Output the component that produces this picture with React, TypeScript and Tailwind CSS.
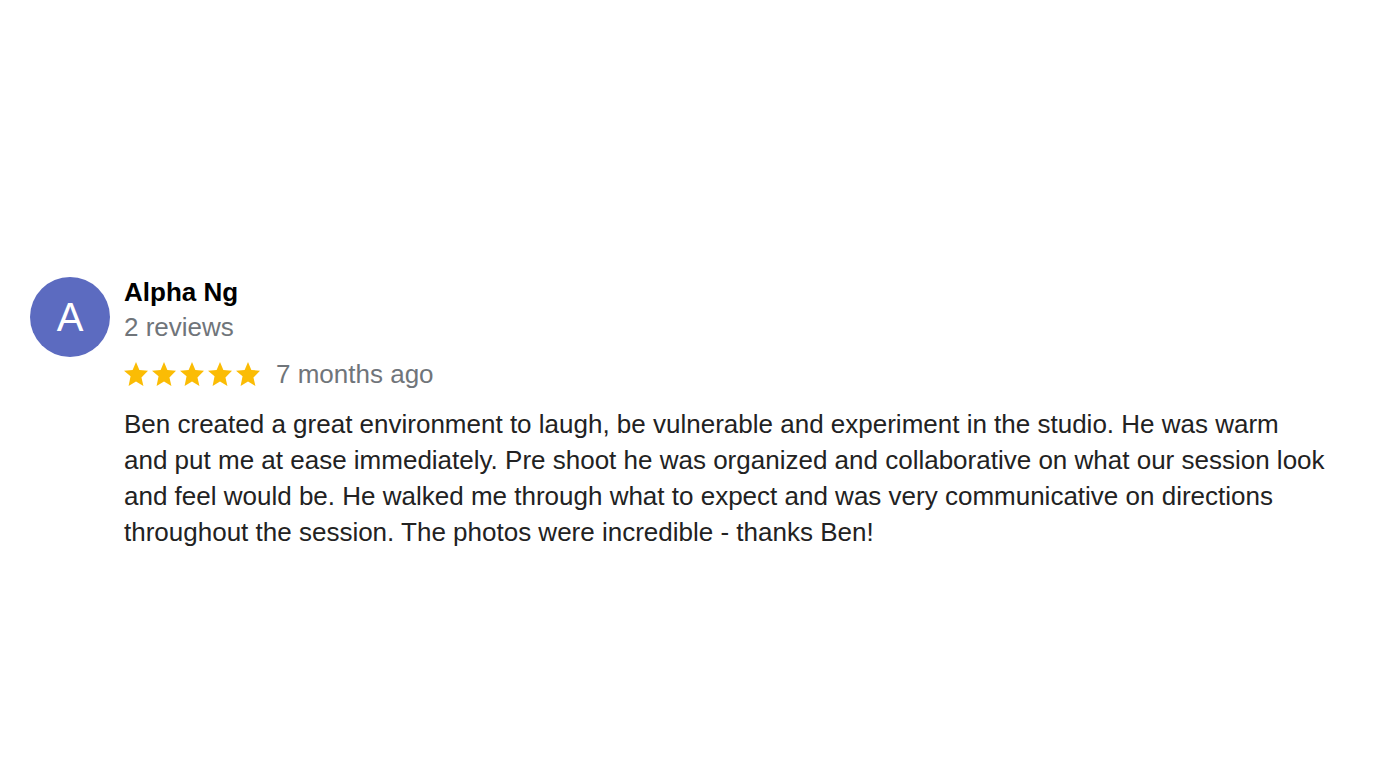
export default function App() {
  const Star = () => (
    <svg viewBox="2 1 20 20" className="w-[24px] h-[24px]" fill="#fbbc04">
      <path d="M12 17.27L18.18 21l-1.64-7.03L22 8.24l-7.19-.61L12 1 9.19 7.63 2 8.24l5.46 4.73L5.82 21z" />
    </svg>
  );
  return (
    <div className="w-[1399px] h-[771px] bg-white" style={{ fontFamily: '"Liberation Sans", Arial, sans-serif' }}>
      <div className="flex pt-[274px] pl-[30px]">
        <div className="w-[80px] h-[80px] mt-[3px] rounded-full bg-[#5c6bc0] flex items-center justify-center text-white text-[40px] shrink-0">
          A
        </div>
        <div className="ml-[14px] flex flex-col">
          <div className="text-[26px] leading-[36px] font-bold text-black">Alpha Ng</div>
          <div className="text-[26px] leading-[34px] text-[#70757a]">2 reviews</div>
          <div className="flex items-center mt-[12px] h-[36px]">
            <div className="flex gap-[4px]">
              <Star />
              <Star />
              <Star />
              <Star />
              <Star />
            </div>
            <span className="ml-[16px] text-[26px] leading-[36px] text-[#70757a]">7 months ago</span>
          </div>
          <p className="mt-[14px] w-[1202px] text-[26px] leading-[36px] text-[#222222]">
            Ben created a great environment to laugh, be vulnerable and experiment in the studio. He was warm and put me at ease immediately. Pre shoot he was organized and collaborative on what our session look and feel would be. He walked me through what to expect and was very communicative on directions throughout the session. The photos were incredible - thanks Ben!
          </p>
        </div>
      </div>
    </div>
  );
}
